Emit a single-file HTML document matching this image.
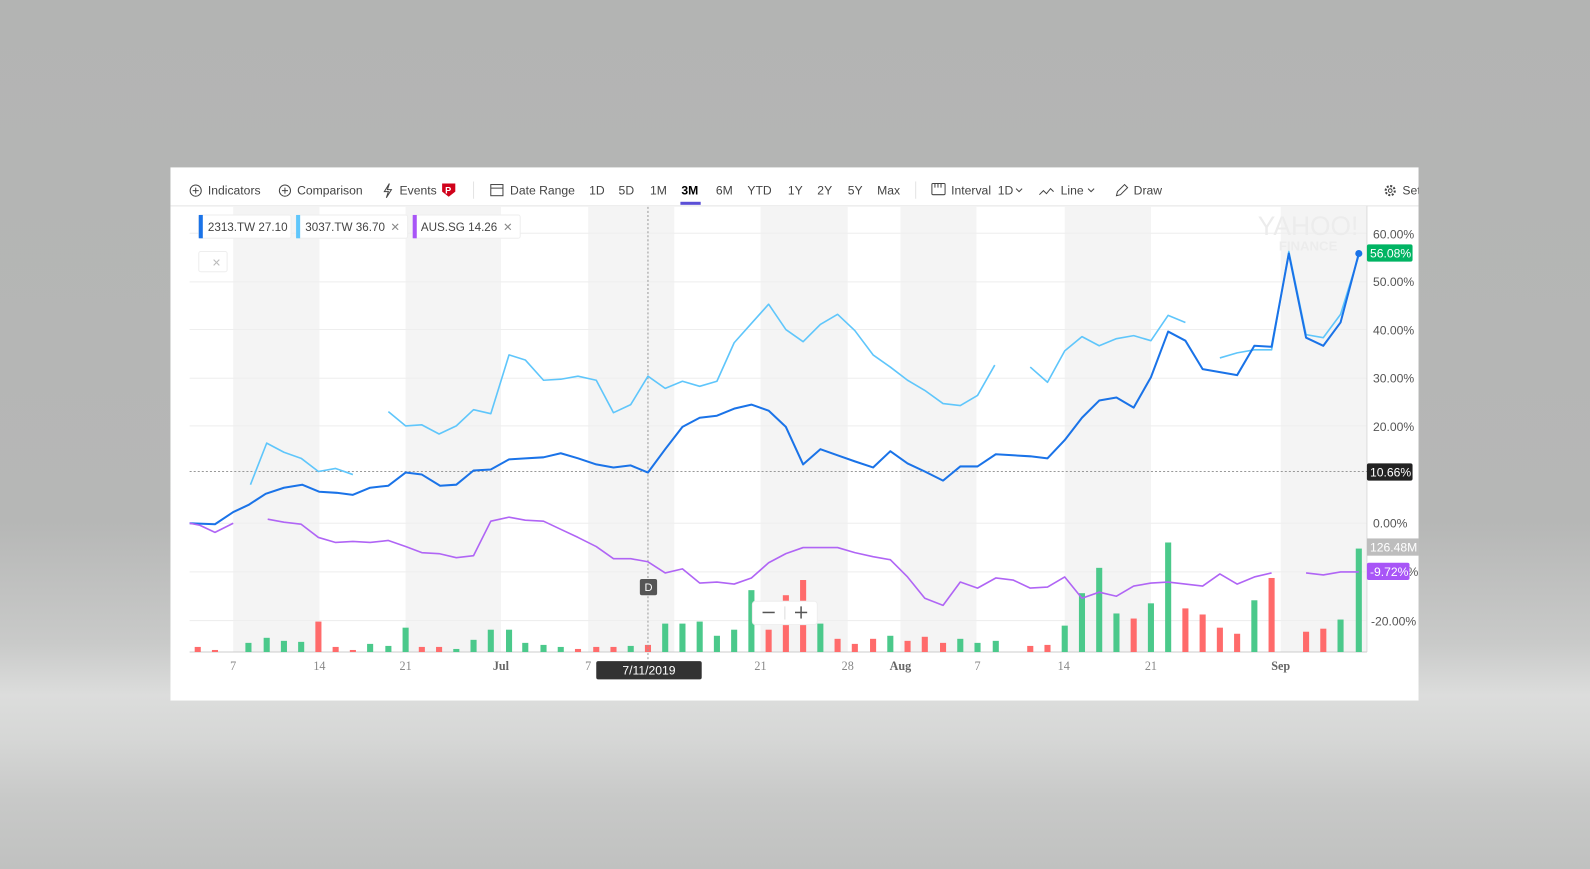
<!DOCTYPE html>
<html><head><meta charset="utf-8"><style>
html,body{margin:0;padding:0;width:1590px;height:869px;overflow:hidden}
body{background:linear-gradient(to bottom,#b3b4b3 0%,#b6b7b6 60%,#c9cac9 74%,#dcdddc 80%,#d6d7d6 85%,#c8c9c8 92%,#c0c1c0 100%)}
svg{position:absolute;left:0;top:0}
text{font-family:"Liberation Sans",sans-serif}
.serif text{font-family:"Liberation Serif",serif}
</style></head><body>
<svg width="1590" height="869" viewBox="0 0 1568 857" preserveAspectRatio="none">
<defs><clipPath id="pc"><rect x="168" y="165" width="1231" height="526"/></clipPath></defs>
<g clip-path="url(#pc)">
<rect x="168" y="165" width="1231" height="526" fill="#fff"/>
<g fill="#f4f4f4">
<rect x="230" y="204" width="85" height="439"/>
<rect x="400" y="204" width="94" height="439"/>
<rect x="580" y="204" width="85" height="439"/>
<rect x="750" y="204" width="86" height="439"/>
<rect x="888" y="204" width="75" height="439"/>
<rect x="1050" y="204" width="85" height="439"/>
<rect x="1263" y="204" width="85" height="439"/>
</g>
<line x1="168" y1="203" x2="1399" y2="203" stroke="#e3e3e3"/>
<g stroke="#eeeeee" stroke-width="1">
<line x1="187" y1="230" x2="1348" y2="230"/><line x1="187" y1="278" x2="1348" y2="278"/>
<line x1="187" y1="325" x2="1348" y2="325"/><line x1="187" y1="373" x2="1348" y2="373"/>
<line x1="187" y1="420" x2="1348" y2="420"/><line x1="187" y1="516" x2="1348" y2="516"/>
<line x1="187" y1="564" x2="1348" y2="564"/><line x1="187" y1="612" x2="1348" y2="612"/>
</g>
<line x1="1348" y1="203" x2="1348" y2="643" stroke="#ddd"/>
<line x1="187" y1="643" x2="1348" y2="643" stroke="#ccc"/>
<text x="1290" y="232" font-size="26" fill="#ececec" text-anchor="middle">YAHOO!</text>
<text x="1290" y="247" font-size="13" fill="#ececec" text-anchor="middle" font-weight="bold">FINANCE</text>
<g fill="#ff6b6b">
<rect x="192" y="638" width="6" height="5"/><rect x="209" y="641" width="6" height="2"/><rect x="311" y="613" width="6" height="30"/><rect x="328" y="638" width="6" height="5"/><rect x="345" y="641" width="6" height="2"/><rect x="413" y="638" width="6" height="5"/><rect x="430" y="638" width="6" height="5"/><rect x="567" y="640" width="6" height="3"/><rect x="585" y="638" width="6" height="5"/><rect x="602" y="638" width="6" height="5"/><rect x="636" y="636" width="6" height="7"/><rect x="755" y="621" width="6" height="22"/><rect x="772" y="587" width="6" height="56"/><rect x="789" y="572" width="6" height="71"/><rect x="823" y="630" width="6" height="13"/><rect x="840" y="635" width="6" height="8"/><rect x="858" y="630" width="6" height="13"/><rect x="892" y="632" width="6" height="11"/><rect x="909" y="628" width="6" height="15"/><rect x="927" y="634" width="6" height="9"/><rect x="1013" y="637" width="6" height="6"/><rect x="1030" y="636" width="6" height="7"/><rect x="1115" y="610" width="6" height="33"/><rect x="1166" y="600" width="6" height="43"/><rect x="1183" y="606" width="6" height="37"/><rect x="1200" y="619" width="6" height="24"/><rect x="1217" y="625" width="6" height="18"/><rect x="1251" y="570" width="6" height="73"/><rect x="1285" y="623" width="6" height="20"/><rect x="1302" y="620" width="6" height="23"/>
</g>
<g fill="#4bc98b">
<rect x="242" y="634" width="6" height="9"/><rect x="260" y="629" width="6" height="14"/><rect x="277" y="632" width="6" height="11"/><rect x="294" y="633" width="6" height="10"/><rect x="362" y="635" width="6" height="8"/><rect x="380" y="637" width="6" height="6"/><rect x="397" y="619" width="6" height="24"/><rect x="447" y="640" width="6" height="3"/><rect x="464" y="631" width="6" height="12"/><rect x="481" y="621" width="6" height="22"/><rect x="499" y="621" width="6" height="22"/><rect x="515" y="634" width="6" height="9"/><rect x="533" y="636" width="6" height="7"/><rect x="550" y="638" width="6" height="5"/><rect x="619" y="637" width="6" height="6"/><rect x="653" y="615" width="6" height="28"/><rect x="670" y="615" width="6" height="28"/><rect x="687" y="613" width="6" height="30"/><rect x="704" y="627" width="6" height="16"/><rect x="721" y="621" width="6" height="22"/><rect x="738" y="582" width="6" height="61"/><rect x="806" y="615" width="6" height="28"/><rect x="875" y="627" width="6" height="16"/><rect x="944" y="630" width="6" height="13"/><rect x="961" y="634" width="6" height="9"/><rect x="979" y="632" width="6" height="11"/><rect x="1047" y="617" width="6" height="26"/><rect x="1064" y="585" width="6" height="58"/><rect x="1081" y="560" width="6" height="83"/><rect x="1098" y="605" width="6" height="38"/><rect x="1132" y="595" width="6" height="48"/><rect x="1149" y="535" width="6" height="108"/><rect x="1234" y="592" width="6" height="51"/><rect x="1319" y="611" width="6" height="32"/><rect x="1337" y="541" width="6" height="102"/>
</g>
<line x1="639" y1="204" x2="639" y2="652" stroke="#999" stroke-dasharray="2,2"/>
<line x1="187" y1="465" x2="1348" y2="465" stroke="#999" stroke-dasharray="2,2"/>
<g fill="none" stroke-width="1.6" stroke-linejoin="round">
<g stroke="#5fc6fb">
<polyline points="247,478 263,437 280,446 297,452 314,465 331,462 348,468"/>
<polyline points="383,406 400,420 416,419 433,428 450,420 467,404 484,408 502,350 518,355 536,375 553,374 570,371 588,375 605,407 622,399 639,371 656,383 673,376 690,381 707,376 724,338 741,319 758,300 775,325 792,337 809,320 826,310 843,326 861,350 878,362 895,375 912,385 930,398 947,400 964,390 981,360"/>
<polyline points="1016,362 1033,377 1050,346 1067,332 1084,341 1101,334 1118,331 1135,336 1152,311 1169,318"/>
<polyline points="1203,353 1220,348 1237,345 1254,345 1271,248 1288,330 1305,333 1322,310 1340,252"/>
</g>
<polyline stroke="#1a73e8" stroke-width="2" points="187,516 212,517 230,505 245,498 262,487 280,481 298,478 315,485 332,486 348,488 365,481 383,479 400,466 416,468 434,479 450,478 467,464 484,463 502,453 518,452 536,451 553,447 570,452 588,458 605,461 622,459 639,466 656,443 673,421 690,412 707,410 724,403 741,399 758,405 775,421 792,458 809,443 826,449 843,455 861,461 878,445 895,457 912,465 930,474 947,460 964,460 982,448 999,449 1016,450 1033,452 1050,434 1067,412 1084,395 1101,392 1118,402 1135,372 1152,327 1169,336 1186,364 1203,367 1220,370 1237,341 1254,342 1271,250 1288,333 1305,341 1322,318 1340,250"/>
<g stroke="#b065f5">
<polyline points="187,516 197,518 212,525 230,516"/>
<polyline points="264,512 280,515 297,517 314,530 331,535 348,534 365,535 383,533 400,539 416,545 433,546 450,550 467,548 484,514 502,510 518,513 536,514 553,522 570,530 588,539 605,551 622,551 639,554 656,565 673,561 690,575 707,574 724,576 741,570 758,555 775,546 792,540 809,540 826,540 843,545 861,549 878,552 895,569 912,590 930,597 947,574 964,580 982,570 999,572 1016,580 1033,579 1050,569 1067,590 1084,584 1101,588 1118,578 1135,575 1152,574 1169,576 1186,578 1203,566 1220,576 1237,569 1254,565"/>
<polyline points="1288,565 1305,567 1322,564 1340,564"/>
</g>
</g>
<circle cx="1340" cy="250" r="3.5" fill="#1a73e8"/>
<g font-size="12" fill="#555">
<text x="1354" y="235">60.00%</text><text x="1354" y="282">50.00%</text><text x="1354" y="330">40.00%</text><text x="1354" y="377">30.00%</text><text x="1354" y="425">20.00%</text><text x="1354" y="520">0.00%</text><text x="1352" y="617">-20.00%</text><text x="1388" y="568">%</text>
</g>
<rect x="1348" y="241" width="45" height="17" rx="2" fill="#00b463"/>
<text x="1351" y="254" font-size="12" fill="#fff">56.08%</text>
<rect x="1348" y="457" width="45" height="17" rx="2" fill="#222"/>
<text x="1351" y="470" font-size="12" fill="#fff">10.66%</text>
<rect x="1348" y="531" width="51" height="17" fill="#bdbdbd"/>
<text x="1351" y="544" font-size="12" fill="#fff">126.48M</text>
<rect x="1348" y="555" width="42" height="17" rx="2" fill="#a855f7"/>
<text x="1351" y="568" font-size="12" fill="#fff">-9.72%</text>
<g class="serif" font-size="12" fill="#888" text-anchor="middle">
<text x="230" y="661">7</text><text x="315" y="661">14</text><text x="400" y="661">21</text><text x="494" y="661" font-weight="bold" fill="#666">Jul</text><text x="580" y="661">7</text><text x="750" y="661">21</text><text x="836" y="661">28</text><text x="888" y="661" font-weight="bold" fill="#666">Aug</text><text x="964" y="661">7</text><text x="1049" y="661">14</text><text x="1135" y="661">21</text><text x="1263" y="661" font-weight="bold" fill="#666">Sep</text>
</g>
<rect x="588" y="652" width="104" height="18" rx="2" fill="#333"/>
<text x="640" y="665" font-size="12" fill="#fff" text-anchor="middle">7/11/2019</text>
<rect x="631" y="571" width="17" height="16" rx="2" fill="#555"/>
<text x="639.5" y="583" font-size="11" fill="#fff" text-anchor="middle">D</text>
<rect x="742" y="593" width="64" height="23" rx="3" fill="#fff" stroke="#eee"/>
<line x1="752" y1="604" x2="764" y2="604" stroke="#555" stroke-width="1.5"/>
<line x1="774" y1="598" x2="774" y2="611" stroke="#ddd"/>
<line x1="784" y1="604" x2="796" y2="604" stroke="#555" stroke-width="1.5"/><line x1="790" y1="598" x2="790" y2="610" stroke="#555" stroke-width="1.5"/>
<g font-size="11.5" fill="#444">
<rect x="196" y="212" width="91" height="23" rx="2" fill="#fff" stroke="#eee"/><rect x="196" y="212" width="4" height="23" fill="#1a73e8"/>
<text x="205" y="228">2313.TW 27.10</text>
<rect x="292" y="212" width="110" height="23" rx="2" fill="#fff" stroke="#eee"/><rect x="292" y="212" width="4" height="23" fill="#5fc6fb"/>
<text x="301" y="228">3037.TW 36.70</text><text x="385" y="228" fill="#888">✕</text>
<rect x="407" y="212" width="106" height="23" rx="2" fill="#fff" stroke="#eee"/><rect x="407" y="212" width="4" height="23" fill="#a855f7"/>
<text x="415" y="228">AUS.SG 14.26</text><text x="496" y="228" fill="#888">✕</text>
<rect x="196" y="248" width="28" height="20" rx="2" fill="#fff" stroke="#eee"/><text x="209" y="263" fill="#bbb" font-size="11">✕</text>
</g>
<g font-size="12" fill="#444">
<circle cx="193" cy="188" r="5.5" fill="none" stroke="#444"/><path d="M190 188h6M193 185v6" stroke="#444"/>
<text x="205" y="192">Indicators</text>
<circle cx="281" cy="188" r="5.5" fill="none" stroke="#444"/><path d="M278 188h6M281 185v6" stroke="#444"/>
<text x="293" y="192">Comparison</text>
<path d="M384 181l-5 8h4l-2 6 5-8h-4z" fill="none" stroke="#444"/>
<text x="394" y="192">Events</text>
<path d="M436 181h13v8l-6.5 5-6.5-5z" fill="#d0021b"/><text x="439" y="191" font-size="9" fill="#fff" font-weight="bold">P</text>
<line x1="467" y1="179" x2="467" y2="196" stroke="#e3e3e3"/>
<rect x="484" y="182" width="12" height="11" fill="none" stroke="#444"/><line x1="484" y1="185.5" x2="496" y2="185.5" stroke="#444"/>
<text x="503" y="192">Date Range</text>
<text x="581" y="192">1D</text><text x="610" y="192">5D</text><text x="641" y="192">1M</text>
<text x="672" y="192" font-weight="bold" fill="#000">3M</text>
<rect x="671" y="199" width="20" height="3" fill="#5b4fd6"/>
<text x="706" y="192">6M</text><text x="737" y="192">YTD</text><text x="777" y="192">1Y</text><text x="806" y="192">2Y</text><text x="836" y="192">5Y</text><text x="865" y="192">Max</text>
<line x1="903" y1="179" x2="903" y2="196" stroke="#e3e3e3"/>
<rect x="919" y="181" width="13" height="11" rx="1" fill="none" stroke="#444"/><path d="M922 181v4M925 181v4M928 181v4" stroke="#444"/>
<text x="938" y="192">Interval</text><text x="984" y="192">1D</text><path d="M1002 186l3 3 3-3" fill="none" stroke="#444"/>
<path d="M1025 192l4-4 3 3 4-5 3 3" fill="none" stroke="#444"/>
<text x="1046" y="192">Line</text><path d="M1073 186l3 3 3-3" fill="none" stroke="#444"/>
<path d="M1101 193l1-4 7-7 3 3-7 7z" fill="none" stroke="#444"/>
<text x="1118" y="192">Draw</text>
<circle cx="1371" cy="188" r="4.5" fill="none" stroke="#444" stroke-width="2" stroke-dasharray="2,1.5"/><circle cx="1371" cy="188" r="1.8" fill="none" stroke="#444"/>
<text x="1383" y="192">Set</text>
</g>
</g>
</svg>
</body></html>
